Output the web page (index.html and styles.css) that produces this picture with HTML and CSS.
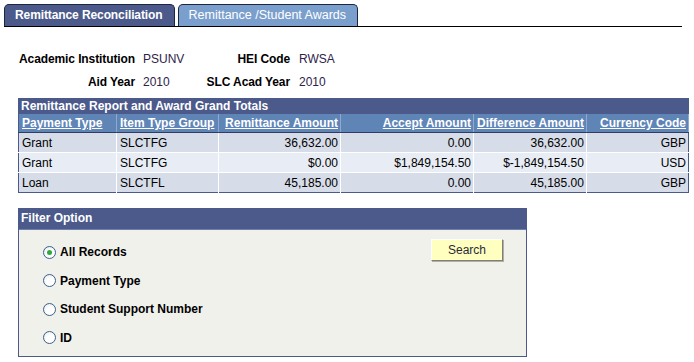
FILE: index.html
```html
<!DOCTYPE html>
<html lang="en">
<head>
    <meta charset="UTF-8">
    <title>Remittance Reconciliation</title>
    <link rel="stylesheet" href="styles.css">
</head>
<body>
    <!-- Page tabs -->
    <div class="tabs">
        <div class="tab active">Remittance Reconciliation</div>
        <div class="tab">Remittance /Student Awards</div>
    </div>

    <!-- Key fields -->
    <div class="keys">
        <span class="key-label">Academic Institution</span>
        <span class="key-value">PSUNV</span>
        <span class="key-label">HEI Code</span>
        <span class="key-value second">RWSA</span>
        <span class="key-label">Aid Year</span>
        <span class="key-value">2010</span>
        <span class="key-label">SLC Acad Year</span>
        <span class="key-value second">2010</span>
    </div>

    <!-- Totals grid -->
    <table class="grid">
        <tr>
            <th class="grid-title" colspan="6">Remittance Report and Award Grand Totals</th>
        </tr>
        <tr class="grid-head">
            <th class="left"><a href="#">Payment Type</a></th>
            <th class="left"><a href="#">Item Type Group</a></th>
            <th><a href="#">Remittance Amount</a></th>
            <th><a href="#">Accept Amount</a></th>
            <th><a href="#">Difference Amount</a></th>
            <th><a href="#">Currency Code</a></th>
        </tr>
        <tr class="odd">
            <td>Grant</td>
            <td>SLCTFG</td>
            <td class="num">36,632.00</td>
            <td class="num">0.00</td>
            <td class="num">36,632.00</td>
            <td class="num">GBP</td>
        </tr>
        <tr class="even">
            <td>Grant</td>
            <td>SLCTFG</td>
            <td class="num">$0.00</td>
            <td class="num">$1,849,154.50</td>
            <td class="num">$-1,849,154.50</td>
            <td class="num">USD</td>
        </tr>
        <tr class="odd">
            <td>Loan</td>
            <td>SLCTFL</td>
            <td class="num">45,185.00</td>
            <td class="num">0.00</td>
            <td class="num">45,185.00</td>
            <td class="num">GBP</td>
        </tr>
    </table>

    <!-- Filter box -->
    <div class="filter">
        <div class="filter-title">Filter Option</div>
        <div class="filter-body">
            <div class="options">
                <label class="option"><input type="radio" name="filter" checked> All Records</label>
                <label class="option"><input type="radio" name="filter"> Payment Type</label>
                <label class="option"><input type="radio" name="filter"> Student Support Number</label>
                <label class="option"><input type="radio" name="filter"> ID</label>
            </div>
            <button type="button" class="search">Search</button>
        </div>
    </div>
</body>
</html>
```

FILE: styles.css
```css
body {
    margin: 0;
    font-family: "Liberation Sans", Arial, sans-serif;
    font-size: 12px;
    color: #000;
    background: #fff;
}

/* tabs */
.tabs {
    display: flex;
    gap: 3px;
    margin: 4px 12px 0 4px;
    border-bottom: 1px solid #000;
}
.tab {
    height: 21px;
    line-height: 21px;
    padding: 0 11px 0 10px;
    color: #fff;
    background: #7b9fcd;
    border: 1px solid #1e2540;
    border-bottom: none;
    border-radius: 5px 5px 0 0;
    font-size: 12.5px;
}
.tab.active {
    background: #4b5a8b;
    font-weight: bold;
    font-size: 12px;
    padding: 0 11px 0 10px;
    letter-spacing: -0.1px;
}

/* key fields */
.keys {
    display: grid;
    grid-template-columns: max-content 68px 87px auto;
    grid-auto-rows: 23px;
    align-items: center;
    margin: 20px 0 5px 19px;
    white-space: nowrap;
}
.key-label {
    font-weight: bold;
    text-align: right;
    letter-spacing: -0.1px;
}
.key-value {
    padding-left: 8px;
    color: #2e2248;
}
.key-value.second {
    padding-left: 9px;
}

/* grid */
.grid {
    margin-left: 18px;
    width: 671px;
    border-collapse: collapse;
    border: 1px solid #4b5a8b;
}
.grid th,
.grid td {
    padding: 0 2px 0 3px;
    white-space: nowrap;
}
.grid-title {
    background: #4b5a8b;
    color: #fff;
    text-align: left;
    height: 15px;
    line-height: 15px;
    padding-left: 2px !important;
}
.grid-head th {
    background: #5f84b6;
    height: 18px;
    text-align: right;
    border-left: 1px solid #3d4c78;
    border-right: 1px solid #8eaad0;
    border-bottom: 1px solid #2f3c66;
}
.grid-head th.left {
    text-align: left;
}
.grid-head th:first-child {
    border-left: none;
}
.grid-head a {
    color: #fff;
    text-decoration: underline;
}
.grid td {
    height: 19px;
    border: 1px solid #fff;
}
.grid td:first-child {
    border-left: none;
}
.grid td:last-child {
    border-right: none;
}
.grid tr:last-child td {
    border-bottom: none;
}
.grid .num {
    text-align: right;
}
.odd td {
    background: #d6dce8;
}
.even td {
    background: #e8ecf4;
}
.grid th:nth-child(1), .grid td:nth-child(1) { width: 92px; }
.grid th:nth-child(2), .grid td:nth-child(2) { width: 96px; }
.grid th:nth-child(3), .grid td:nth-child(3) { width: 116px; }
.grid th:nth-child(4), .grid td:nth-child(4) { width: 127px; }
.grid th:nth-child(5), .grid td:nth-child(5) { width: 105px; }

/* filter */
.filter {
    margin: 15px 0 0 18px;
    width: 507px;
    border: 1px solid #4b5a8b;
}
.filter-title {
    background: #4b5a8b;
    color: #fff;
    font-weight: bold;
    height: 20px;
    line-height: 18px;
    padding-left: 2px;
    border-bottom: 1px solid #6f7fae;
}
.filter-body {
    display: flex;
    justify-content: space-between;
    align-items: flex-start;
    background: #f1f1ec;
    padding: 8px 23px 4px 24px;
}
.options {
    display: flex;
    flex-direction: column;
}
.option {
    display: flex;
    align-items: center;
    gap: 4px;
    height: 28.5px;
    font-weight: bold;
    font-size: 12px;
}
.option input {
    appearance: none;
    margin: 0;
    width: 13px;
    height: 13px;
    border: 1px solid #3b5f8e;
    border-radius: 50%;
    background: radial-gradient(circle at 60% 65%, #fff 40%, #dfe3e8 100%);
    display: grid;
    place-items: center;
}
.option input:checked::after {
    content: "";
    width: 5px;
    height: 5px;
    border-radius: 50%;
    background: #2caa3a;
}
.search {
    margin-top: 1px;
    width: 72px;
    height: 22px;
    padding: 0;
    font-family: "Liberation Sans", Arial, sans-serif;
    font-size: 12px;
    color: #2a2a3a;
    background: #ffffc0;
    border: 1px solid;
    border-color: #fff #7f7f7f #7f7f7f #fff;
    box-shadow: 1px 1px 0 #b0b0a0;
    cursor: pointer;
}
```
